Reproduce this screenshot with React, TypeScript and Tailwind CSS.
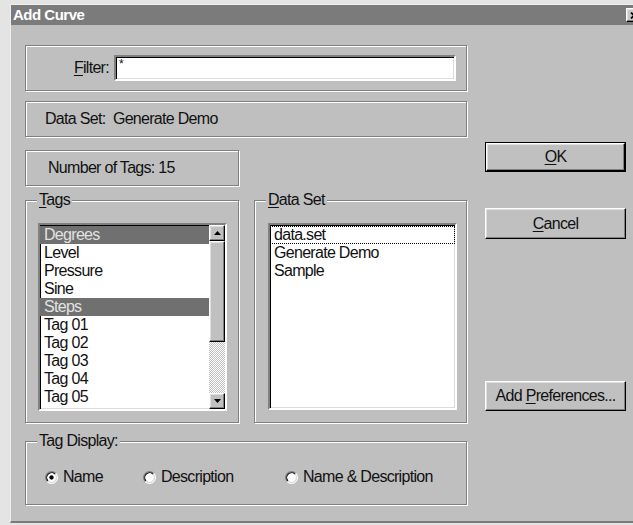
import React from "react";

const font = "font-['Liberation_Sans',Arial,sans-serif] text-[16px] tracking-[-0.7px] text-[#111]";

// Win95-style frames
const etched = "border border-[#808080] shadow-[1px_1px_0_#fff,inset_1px_1px_0_#fff]";
const sunken =
  "border-2 border-t-[#808080] border-l-[#808080] border-b-white border-r-white shadow-[inset_1px_1px_0_#000,inset_-1px_-1px_0_#dcdcdc]";
const raised =
  "border border-t-white border-l-white border-r-black border-b-black shadow-[inset_-1px_-1px_0_#808080,inset_1px_1px_0_#dfdfdf]";

function Mn({ children }: { children: React.ReactNode }) {
  return <span className="underline underline-offset-2">{children}</span>;
}

function GroupBox({ label, className, children }: { label: React.ReactNode; className?: string; children?: React.ReactNode }) {
  return (
    <div className={`relative ${etched} ${className ?? ""}`}>
      <span className="absolute -top-[10px] left-[11px] bg-[#bfbfbf] px-[2px] leading-[18px]">{label}</span>
      {children}
    </div>
  );
}

function Arrow({ up }: { up?: boolean }) {
  return (
    <div className={`flex h-[16px] w-[16px] items-center justify-center bg-[#c0c0c0] ${raised}`}>
      <svg width="7" height="4" viewBox="0 0 7 4">
        {up ? <path d="M3.5 0 L7 4 L0 4 Z" fill="#000" /> : <path d="M0 0 L7 0 L3.5 4 Z" fill="#000" />}
      </svg>
    </div>
  );
}

function Radio({ checked }: { checked?: boolean }) {
  return (
    <svg width="13" height="13" viewBox="0 0 12 12" className="shrink-0">
      <circle cx="6" cy="6" r="4.5" fill="#fff" />
      <path d="M9.89 2.11 A5.5 5.5 0 0 0 2.11 9.89" stroke="#808080" fill="none" />
      <path d="M9.18 2.82 A4.5 4.5 0 0 0 2.82 9.18" stroke="#000" fill="none" />
      <path d="M9.89 2.11 A5.5 5.5 0 0 1 2.11 9.89" stroke="#fff" fill="none" />
      <path d="M9.18 2.82 A4.5 4.5 0 0 1 2.82 9.18" stroke="#dcdcdc" fill="none" />
      {checked && <circle cx="6" cy="6" r="2" fill="#000" />}
    </svg>
  );
}

const tags = ["Degrees", "Level", "Pressure", "Sine", "Steps", "Tag 01", "Tag 02", "Tag 03", "Tag 04", "Tag 05"];
const selected = ["Degrees", "Steps"];
const dataSets = ["data.set", "Generate Demo", "Sample"];

export default function App() {
  return (
    <div className={`h-[525px] w-[633px] overflow-hidden bg-[#e4e4e4] pl-[10px] pt-[4px] ${font}`}>
      <div className="h-[519px] w-[640px] border-l border-t border-b-2 border-l-[#efefef] border-t-[#efefef] border-b-[#7a7a7a] bg-[#bfbfbf]">
        {/* title bar */}
        <div className="flex h-[20px] items-center bg-[#7b7b7b] pl-[2px]">
          <span className="text-[15px] font-bold tracking-[-0.5px] text-white">Add Curve</span>
          <div className={`ml-auto mr-[8px] flex h-[14px] w-[16px] items-center justify-center bg-[#c8c8c8] ${raised}`}>
            <svg width="8" height="7" viewBox="0 0 8 7">
              <path d="M1 0.5 L7 6.5 M7 0.5 L1 6.5" stroke="#000" strokeWidth="1.8" />
            </svg>
          </div>
        </div>

        <div className="flex">
          {/* left column */}
          <div className="ml-[14px] flex w-[442px] flex-col">
            <div className={`mt-[20px] flex h-[46px] items-center ${etched}`}>
              <span className="w-[83px] text-right">
                <Mn>F</Mn>ilter:
              </span>
              <div className={`ml-[5px] h-[26px] w-[342px] bg-white pl-[3px] text-[12px] leading-[14px] ${sunken}`}>*</div>
            </div>

            <div className={`mt-[10px] flex h-[36px] items-center pl-[19px] ${etched}`}>Data Set:&nbsp; Generate Demo</div>

            <div className={`mt-[13px] flex h-[36px] w-[214px] items-center pl-[22px] ${etched}`}>Number of Tags: 15</div>

            <div className="mt-[14px] flex gap-[15px]">
              <GroupBox
                className="h-[223px] w-[214px] pl-[12px] pt-[22px]"
                label={
                  <>
                    <Mn>T</Mn>ags
                  </>
                }
              >
                <div className={`flex h-[188px] w-[189px] bg-white ${sunken}`}>
                  <div className="flex-1 pt-px">
                    {tags.map((t) => (
                      <div
                        key={t}
                        className={`h-[18px] pl-[4px] leading-[18px] ${selected.includes(t) ? "bg-[#707070] text-[#e2e2e2]" : ""}`}
                      >
                        {t}
                      </div>
                    ))}
                  </div>
                  <div className="flex w-[16px] flex-col">
                    <Arrow up />
                    <div className={`h-[101px] bg-[#c0c0c0] ${raised}`} />
                    <div className="flex-1 bg-[image:repeating-conic-gradient(#fff_0_25%,#c0c0c0_0_50%)] bg-[length:2px_2px]" />
                    <Arrow />
                  </div>
                </div>
              </GroupBox>

              <GroupBox
                className="h-[223px] w-[213px] pl-[13px] pt-[22px]"
                label={
                  <>
                    <Mn>D</Mn>ata Set
                  </>
                }
              >
                <div className={`h-[187px] w-[189px] bg-white pt-px ${sunken}`}>
                  {dataSets.map((d, i) => (
                    <div
                      key={d}
                      className={`h-[18px] pl-[3px] leading-[16px] ${i === 0 ? "border border-dotted border-black" : "border border-transparent"}`}
                    >
                      {d}
                    </div>
                  ))}
                </div>
              </GroupBox>
            </div>

            <GroupBox className="mt-[18px] flex h-[64px] items-center pl-[19px] pt-[8px]" label="Tag Display:">
              <label className="flex w-[98px] items-center gap-[5px]">
                <Radio checked />
                Name
              </label>
              <label className="flex w-[142px] items-center gap-[5px]">
                <Radio />
                Description
              </label>
              <label className="flex items-center gap-[5px]">
                <Radio />
                Name &amp; Description
              </label>
            </GroupBox>
          </div>

          {/* right column */}
          <div className="ml-[18px] flex w-[141px] flex-col">
            <div className="mt-[117px] h-[30px] border border-black">
              <div className={`flex h-full items-center justify-center bg-[#c0c0c0] ${raised}`}>
                <span>
                  <Mn>O</Mn>K
                </span>
              </div>
            </div>
            <div className={`mt-[36px] flex h-[31px] items-center justify-center bg-[#c0c0c0] ${raised}`}>
              <span>
                <Mn>C</Mn>ancel
              </span>
            </div>
            <div className={`mt-[142px] flex h-[30px] items-center justify-center bg-[#c0c0c0] ${raised}`}>
              <span>
                Add <Mn>P</Mn>references...
              </span>
            </div>
          </div>
        </div>
      </div>
    </div>
  );
}
